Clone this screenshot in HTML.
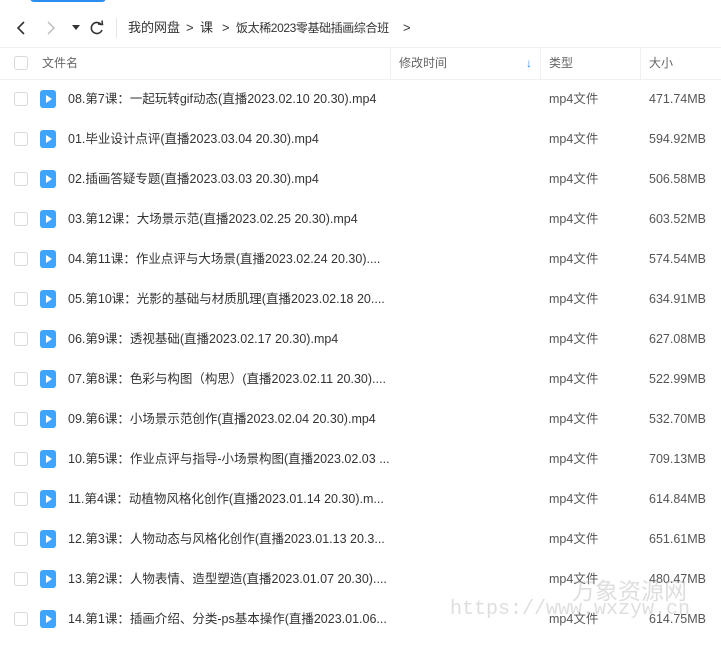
<!DOCTYPE html>
<html><head><meta charset="utf-8"><style>
body{margin:0;width:721px;height:645px;background:#fff;font-family:"Liberation Sans","Noto Sans CJK SC",sans-serif;overflow:hidden;position:relative;color:#333}
.top{position:absolute;left:30px;top:-6px;width:76px;height:8px;background:#2d8cf0;border-radius:4px}
.nav{position:absolute;top:14px;left:0;height:28px;width:721px;font-size:13px;line-height:28px}
.nav span{position:absolute;top:0;white-space:nowrap}
.hdr{position:absolute;top:47px;left:0;width:721px;height:31px;border-top:1px solid #eef0f3;border-bottom:1px solid #eef0f3;font-size:12px;color:#666;line-height:31px}
.hdr span{position:absolute;top:0}
.vd{position:absolute;top:0;width:1px;height:31px;background:#eef0f3}
.cb{position:absolute;left:14px;width:12px;height:12px;border:1px solid #d6d9de;border-radius:3px;background:#fff}
.row{position:absolute;left:0;width:721px;height:40px;font-size:12.5px;color:#333;line-height:40px}
.row .cb{top:13px}
.ic{position:absolute;left:40px;top:11px;width:16px;height:18px;background:#3ea4ff;border-radius:3px}
.ic:after{content:"";position:absolute;left:6px;top:5px;border-left:6px solid #fff;border-top:4px solid transparent;border-bottom:4px solid transparent}
.nm{position:absolute;left:68px;top:0;white-space:nowrap}
.tp{position:absolute;left:549px;top:0;color:#555}
.sz{position:absolute;right:15px;top:0;color:#555}
.wm{position:absolute;color:rgba(160,160,160,.35);white-space:nowrap}
</style></head><body>
<div class="top"></div>
<div class="nav">
<svg style="position:absolute;left:14px;top:6px" width="14" height="16"><path d="M10 2 L4 8 L10 14" stroke="#333" stroke-width="1.6" fill="none"/></svg>
<svg style="position:absolute;left:44px;top:6px" width="14" height="16"><path d="M4 2 L10 8 L4 14" stroke="#bbb" stroke-width="1.4" fill="none"/></svg>
<svg style="position:absolute;left:72px;top:11px" width="8" height="6"><path d="M0 0 L8 0 L4 5Z" fill="#333"/></svg>
<svg style="position:absolute;left:89px;top:6px" width="16" height="16"><path d="M12.5 5 A5.5 5.5 0 1 0 13 10" stroke="#333" stroke-width="1.6" fill="none"/><path d="M9 4 L13.5 4.5 L13 0.5" stroke="#333" stroke-width="1.5" fill="none"/></svg>
<div style="position:absolute;left:116px;top:4px;width:1px;height:20px;background:#e5e5e5"></div>
<span style="left:128px">我的网盘</span><span style="left:186px">&gt;</span><span style="left:200px">课</span><span style="left:222px">&gt;</span><span style="left:236px;font-size:12px;letter-spacing:-0.4px">饭太稀2023零基础插画综合班</span><span style="left:403px">&gt;</span>
</div>
<div class="hdr">
<div class="cb" style="top:8px"></div>
<span style="left:42px">文件名</span>
<div class="vd" style="left:390px"></div><span style="left:399px">修改时间</span>
<span style="left:526px;color:#2d8cf0;font-weight:bold">↓</span>
<div class="vd" style="left:540px"></div><span style="left:549px">类型</span>
<div class="vd" style="left:640px"></div><span style="left:649px">大小</span>
</div>
<div class="row" style="top:79px"><div class="cb"></div><div class="ic"></div><span class="nm">08.第7课：一起玩转gif动态(直播2023.02.10 20.30).mp4</span><span class="tp">mp4文件</span><span class="sz">471.74MB</span></div>
<div class="row" style="top:119px"><div class="cb"></div><div class="ic"></div><span class="nm">01.毕业设计点评(直播2023.03.04 20.30).mp4</span><span class="tp">mp4文件</span><span class="sz">594.92MB</span></div>
<div class="row" style="top:159px"><div class="cb"></div><div class="ic"></div><span class="nm">02.插画答疑专题(直播2023.03.03 20.30).mp4</span><span class="tp">mp4文件</span><span class="sz">506.58MB</span></div>
<div class="row" style="top:199px"><div class="cb"></div><div class="ic"></div><span class="nm">03.第12课：大场景示范(直播2023.02.25 20.30).mp4</span><span class="tp">mp4文件</span><span class="sz">603.52MB</span></div>
<div class="row" style="top:239px"><div class="cb"></div><div class="ic"></div><span class="nm">04.第11课：作业点评与大场景(直播2023.02.24 20.30)....</span><span class="tp">mp4文件</span><span class="sz">574.54MB</span></div>
<div class="row" style="top:279px"><div class="cb"></div><div class="ic"></div><span class="nm">05.第10课：光影的基础与材质肌理(直播2023.02.18 20....</span><span class="tp">mp4文件</span><span class="sz">634.91MB</span></div>
<div class="row" style="top:319px"><div class="cb"></div><div class="ic"></div><span class="nm">06.第9课：透视基础(直播2023.02.17 20.30).mp4</span><span class="tp">mp4文件</span><span class="sz">627.08MB</span></div>
<div class="row" style="top:359px"><div class="cb"></div><div class="ic"></div><span class="nm">07.第8课：色彩与构图（构思）(直播2023.02.11 20.30)....</span><span class="tp">mp4文件</span><span class="sz">522.99MB</span></div>
<div class="row" style="top:399px"><div class="cb"></div><div class="ic"></div><span class="nm">09.第6课：小场景示范创作(直播2023.02.04 20.30).mp4</span><span class="tp">mp4文件</span><span class="sz">532.70MB</span></div>
<div class="row" style="top:439px"><div class="cb"></div><div class="ic"></div><span class="nm">10.第5课：作业点评与指导-小场景构图(直播2023.02.03 ...</span><span class="tp">mp4文件</span><span class="sz">709.13MB</span></div>
<div class="row" style="top:479px"><div class="cb"></div><div class="ic"></div><span class="nm">11.第4课：动植物风格化创作(直播2023.01.14 20.30).m...</span><span class="tp">mp4文件</span><span class="sz">614.84MB</span></div>
<div class="row" style="top:519px"><div class="cb"></div><div class="ic"></div><span class="nm">12.第3课：人物动态与风格化创作(直播2023.01.13 20.3...</span><span class="tp">mp4文件</span><span class="sz">651.61MB</span></div>
<div class="row" style="top:559px"><div class="cb"></div><div class="ic"></div><span class="nm">13.第2课：人物表情、造型塑造(直播2023.01.07 20.30)....</span><span class="tp">mp4文件</span><span class="sz">480.47MB</span></div>
<div class="row" style="top:599px"><div class="cb"></div><div class="ic"></div><span class="nm">14.第1课：插画介绍、分类-ps基本操作(直播2023.01.06...</span><span class="tp">mp4文件</span><span class="sz">614.75MB</span></div>
<div class="wm" style="left:572px;top:574px;font-size:23px;font-family:'Noto Sans CJK SC',sans-serif;line-height:30px">万象资源网</div>
<div class="wm" style="left:450px;top:597px;font-size:20px;font-family:'Liberation Mono',monospace;line-height:26px">https://www.wxzyw.cn</div>
</body></html>
